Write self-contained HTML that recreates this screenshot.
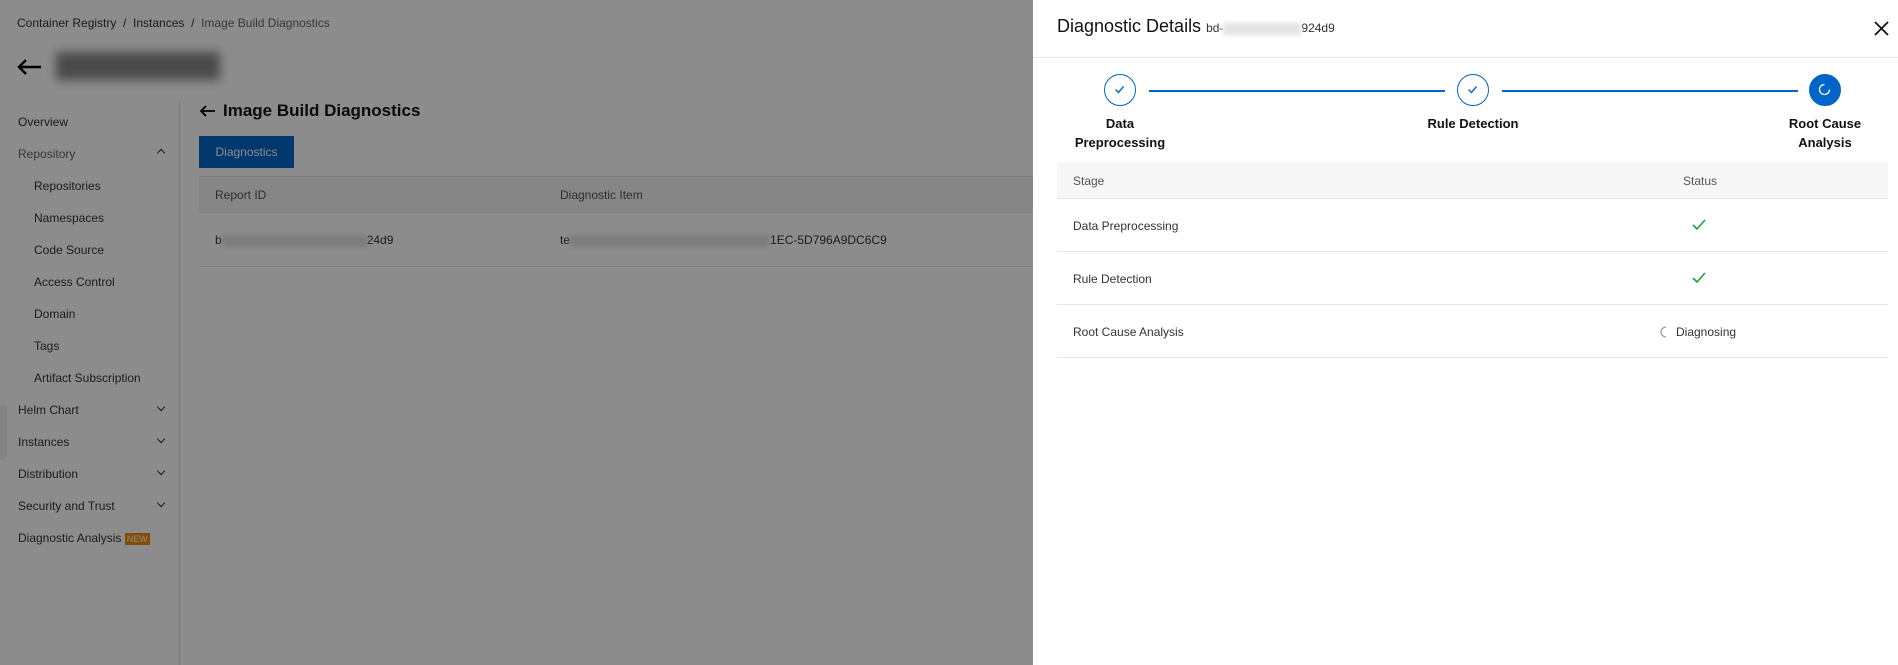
<!DOCTYPE html>
<html><head><meta charset="utf-8"><style>
*{box-sizing:border-box;margin:0;padding:0}
body{width:1898px;height:665px;overflow:hidden;background:#fff;font-family:"Liberation Sans",sans-serif;font-size:12px;color:#333;position:relative}
.a{position:absolute;white-space:nowrap}
.m{color:#333}
.chev{position:absolute;left:158px;width:6px;height:6px;border-right:1.3px solid #333;border-bottom:1.3px solid #333;transform:rotate(45deg)}
.blur{display:inline-block;background:#e4e4e4;filter:blur(2px);height:12px;vertical-align:middle}
#ov{position:absolute;left:0;top:0;width:1033px;height:665px;background:rgba(0,0,0,0.45)}
#dr{position:absolute;left:1033px;top:0;width:865px;height:665px;background:#fff}
.circ{position:absolute;width:32px;height:32px;border:1.5px solid #0064c8;border-radius:50%;background:#fff;top:74px}
.circ svg{position:absolute;left:8px;top:8px}
.line{position:absolute;top:90px;height:1.5px;background:#0064c8}
.lbl{position:absolute;font-weight:bold;font-size:13px;color:#111;text-align:center;line-height:19px}
.row{position:absolute;left:1057px;width:831px;border-bottom:1px solid #e5e5e5}
</style></head><body>
<div class="a" style="left:17px;top:16px;font-size:12px;color:#333">Container Registry &nbsp;/&nbsp; Instances &nbsp;/&nbsp; <span style="color:#666">Image Build Diagnostics</span></div>
<svg class="a" style="left:16px;top:58px" width="26" height="18" viewBox="0 0 26 18"><path d="M25 9H3M10 2L3 9l7 7" stroke="#000" stroke-width="2.4" fill="none"/></svg>
<div class="a" style="left:56px;top:52px;width:164px;height:28px;background:#555;filter:blur(5px);opacity:.7"></div>
<div class="a" style="left:179px;top:102px;width:1px;height:563px;background:#ddd"></div>
<div class="a m" style="left:18px;top:115px">Overview</div>
<div class="a" style="left:18px;top:147px;color:#666">Repository</div>
<div class="chev" style="top:150px;transform:rotate(-135deg)"></div>
<div class="a m" style="left:34px;top:179px">Repositories</div>
<div class="a m" style="left:34px;top:211px">Namespaces</div>
<div class="a m" style="left:34px;top:243px">Code Source</div>
<div class="a m" style="left:34px;top:275px">Access Control</div>
<div class="a m" style="left:34px;top:307px">Domain</div>
<div class="a m" style="left:34px;top:339px">Tags</div>
<div class="a m" style="left:34px;top:371px">Artifact Subscription</div>
<div class="a m" style="left:18px;top:403px">Helm Chart</div><div class="chev" style="top:404px"></div>
<div class="a m" style="left:18px;top:435px">Instances</div><div class="chev" style="top:436px"></div>
<div class="a m" style="left:18px;top:467px">Distribution</div><div class="chev" style="top:468px"></div>
<div class="a m" style="left:18px;top:499px">Security and Trust</div><div class="chev" style="top:500px"></div>
<div class="a m" style="left:18px;top:531px">Diagnostic Analysis <span style="background:#f08a00;color:#fff;font-size:9px;padding:1px 2px">NEW</span></div>
<div class="a" style="left:0;top:405px;width:7px;height:55px;background:#eee;border-radius:0 4px 4px 0"></div>
<svg class="a" style="left:199px;top:104px" width="17" height="14" viewBox="0 0 17 14"><path d="M16 7H2M7 2L2 7l5 5" stroke="#000" stroke-width="1.8" fill="none"/></svg>
<div class="a" style="left:223px;top:101px;font-size:17px;font-weight:bold;color:#111">Image Build Diagnostics</div>
<div class="a" style="left:199px;top:136px;width:95px;height:32px;background:#0064c8;color:#fff;line-height:32px;text-align:center">Diagnostics</div>
<div class="a" style="left:199px;top:176px;width:834px;height:37px;background:#f5f5f5;border-top:1px solid #e5e5e5;border-bottom:1px solid #e5e5e5"></div>
<div class="a" style="left:215px;top:188px;color:#555">Report ID</div>
<div class="a" style="left:560px;top:188px;color:#555">Diagnostic Item</div>
<div class="a" style="left:215px;top:233px">b<span class="blur" style="width:145px"></span>24d9</div>
<div class="a" style="left:560px;top:233px">te<span class="blur" style="width:200px"></span>1EC-5D796A9DC6C9</div>
<div class="a" style="left:199px;top:266px;width:834px;height:1px;background:#e5e5e5"></div>
<div id="ov"></div>
<div id="dr"></div>
<div class="a" style="left:1057px;top:16px;font-size:18px;color:#111">Diagnostic Details <span style="font-size:12px;color:#333">bd-<span class="blur" style="width:78px"></span>924d9</span></div>
<svg class="a" style="left:1874px;top:21px" width="15" height="15" viewBox="0 0 15 15"><path d="M1 1l13 13M14 1L1 14" stroke="#111" stroke-width="1.8"/></svg>
<div class="a" style="left:1033px;top:57px;width:865px;height:1px;background:#e5e5e5"></div>
<div class="circ" style="left:1104px"><svg width="13" height="13" viewBox="0 0 13 13"><path d="M2.5 6.5l3 3 5-6" stroke="#0064c8" stroke-width="1.4" fill="none"/></svg></div>
<div class="circ" style="left:1457px"><svg width="13" height="13" viewBox="0 0 13 13"><path d="M2.5 6.5l3 3 5-6" stroke="#0064c8" stroke-width="1.4" fill="none"/></svg></div>
<div class="circ" style="left:1809px;background:#0064c8"><svg width="13" height="13" viewBox="0 0 13 13"><path d="M6.5 1.5A5 5 0 1 0 11.5 6.5" stroke="#fff" stroke-width="1.3" fill="none"/></svg></div>
<div class="line" style="left:1149px;width:296px"></div>
<div class="line" style="left:1502px;width:296px"></div>
<div class="lbl" style="left:1070px;top:114px;width:100px">Data<br>Preprocessing</div>
<div class="lbl" style="left:1413px;top:114px;width:120px">Rule Detection</div>
<div class="lbl" style="left:1775px;top:114px;width:100px">Root Cause<br>Analysis</div>
<div class="row" style="top:162px;height:37px;background:#f7f7f7"></div>
<div class="a" style="left:1073px;top:174px;color:#555">Stage</div>
<div class="a" style="left:1683px;top:174px;color:#555">Status</div>
<div class="row" style="top:199px;height:53px"></div>
<div class="a" style="left:1073px;top:219px">Data Preprocessing</div>
<svg class="a" style="left:1692px;top:219px" width="14" height="12" viewBox="0 0 14 12"><path d="M1 6l4 4 8-9" stroke="#1aa53a" stroke-width="1.6" fill="none"/></svg>
<div class="row" style="top:252px;height:53px"></div>
<div class="a" style="left:1073px;top:272px">Rule Detection</div>
<svg class="a" style="left:1692px;top:272px" width="14" height="12" viewBox="0 0 14 12"><path d="M1 6l4 4 8-9" stroke="#1aa53a" stroke-width="1.6" fill="none"/></svg>
<div class="row" style="top:305px;height:53px"></div>
<div class="a" style="left:1073px;top:325px">Root Cause Analysis</div>
<svg class="a" style="left:1660px;top:326px" width="12" height="12" viewBox="0 0 12 12"><path d="M6 1A5 5 0 0 0 6 11" stroke="#999" stroke-width="1.3" fill="none"/></svg>
<div class="a" style="left:1676px;top:325px">Diagnosing</div>
</body></html>
